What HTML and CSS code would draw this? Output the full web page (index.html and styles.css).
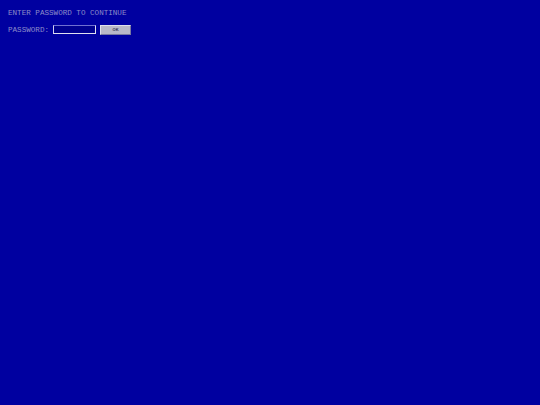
FILE: index.html
```html
<!DOCTYPE html>
<html>
<head>
<meta charset="utf-8">
<link rel="stylesheet" href="styles.css">
</head>
<body>
<div class="screen">
  <div class="prompt">ENTER PASSWORD TO CONTINUE</div>
  <form class="row">
    <label class="label" for="pw">PASSWORD:</label>
    <input class="field" id="pw" type="password">
    <button class="ok" type="button">OK</button>
  </form>
</div>
</body>
</html>
```
FILE: styles.css
```css
html, body {
  margin: 0;
  padding: 0;
  background: #0000a0;
  height: 100%;
}
.screen {
  padding: 8px 8px;
  font-family: "Liberation Mono", "DejaVu Sans Mono", monospace;
  font-size: 7.6px;
  color: #8c8cc8;
}
.prompt {
  line-height: 10px;
}
.row {
  display: flex;
  align-items: flex-start;
  margin: 7px 0 0 0;
  gap: 4px;
}
.label {
  line-height: 10px;
}
.field {
  box-sizing: border-box;
  width: 43px;
  height: 9px;
  margin: 0;
  padding: 0;
  background: #000090;
  border: 1px solid;
  border-color: #7070d0 #e0e0f0 #e0e0f0 #d0d0f0;
  outline: none;
}
.ok {
  box-sizing: border-box;
  width: 31px;
  height: 10px;
  margin: 0;
  padding: 0;
  background: #b8b8c8;
  border: 1px solid;
  border-color: #e0e0ec #7878a0 #7878a0 #e0e0ec;
  font-family: "Liberation Sans", Arial, sans-serif;
  font-size: 4px;
  font-weight: bold;
  color: #303050;
  line-height: 8px;
}
```
